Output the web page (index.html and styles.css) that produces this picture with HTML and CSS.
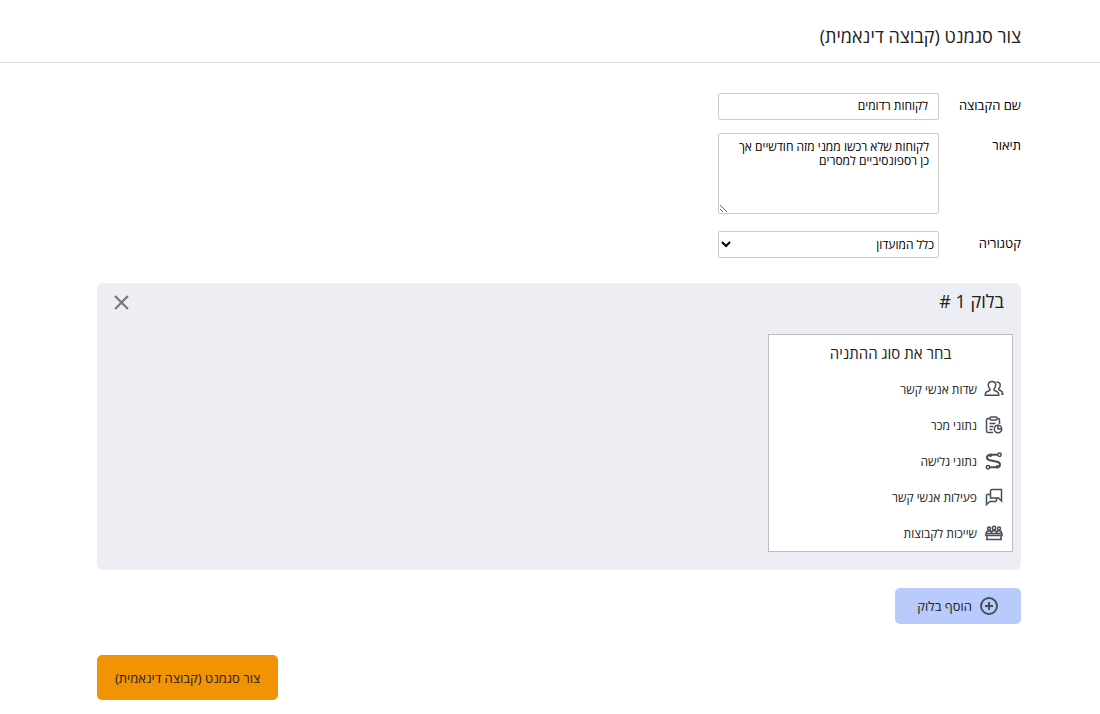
FILE: index.html
```html
<!DOCTYPE html>
<html lang="he" dir="rtl">
<head>
  <meta charset="UTF-8" />
  <meta name="viewport" content="width=device-width, initial-scale=1" />
  <title>צור סגמנט</title>
  <link rel="stylesheet" href="styles.css">
</head>
<body>
  <header class="page-header">
    <h1>צור סגמנט (קבוצה דינאמית)</h1>
  </header>

  <form class="content">
    <div class="fields">
      <label for="groupName">שם הקבוצה</label>
      <input id="groupName" class="control" type="text" value="לקוחות רדומים" />

      <label for="description">תיאור</label>
      <textarea id="description" class="control">לקוחות שלא רכשו ממני מזה חודשיים אך כן רספונסיביים למסרים</textarea>

      <label for="category">קטגוריה</label>
      <select id="category" class="control">
        <option>כלל המועדון</option>
      </select>
    </div>

    <section class="block">
      <div class="block-header">
        <h2>בלוק 1 #</h2>
        <button type="button" class="close" aria-label="סגור">
          <svg viewBox="0 0 14 14"><path d="M1 1l12 12M13 1L1 13" /></svg>
        </button>
      </div>

      <div class="conditions">
        <h3>בחר את סוג ההתניה</h3>
        <!-- Contact fields -->
        <button type="button" class="condition">
          <svg viewBox="0 0 20 20">
            <path d="M8 2.500c-2.300 0-3.700 1.500-3.700 3.600 0 1.700.6 3 1.500 3.800.5.500.3 1.300-.3 1.600l-2.600 1.200c-1.200.6-1.700 1.500-1.700 3.500h13.600c0-2-.5-2.900-1.700-3.500l-2.600-1.200c-.6-.3-.8-1.100-.3-1.600.9-.8 1.500-2.100 1.500-3.800 0-2.100-1.400-3.600-3.700-3.600z" />
            <path d="M12.500 2.900c2.300-.2 3.700 1.200 3.700 3.300 0 1.400-.5 2.600-1.300 3.300-.5.500-.3 1.200.3 1.500l1.700.8c1.300.6 1.800 1.500 1.800 3.400h-1.500" />
          </svg>
          <span>שדות אנשי קשר</span>
        </button>
        <!-- Sales data -->
        <button type="button" class="condition">
          <svg viewBox="0 0 20 20">
            <path d="M6 3.500H4.200C3 3.500 2.500 4 2.500 5v11c0 1 .5 1.500 1.700 1.500H9M13 3.500h1c1 0 1.500.5 1.500 1.500v4" />
            <rect x="6" y="2" width="7" height="3" rx="1" />
            <path d="M5.500 8.500h6M5.500 11.500h4M5.500 14.500h3" />
            <circle cx="14" cy="14" r="3.700" />
            <path d="M14 11v3h3" />
          </svg>
          <span>נתוני מכר</span>
        </button>
        <!-- Browsing data -->
        <button type="button" class="condition">
          <svg viewBox="0 0 20 20">
            <circle cx="15.500" cy="3.700" r="1.700" />
            <circle cx="4" cy="16.200" r="1.700" />
            <path class="thick" d="M13.800 3.700H7C1.500 4 2 8.500 6 9.300l7 1.400c4 .8 4 5.200 0 5.500H5.700" />
            <circle cx="6.500" cy="4.300" r="1" />
            <circle cx="13.500" cy="15.700" r="1" />
          </svg>
          <span>נתוני גלישה</span>
        </button>
        <!-- Contact activity -->
        <button type="button" class="condition">
          <svg viewBox="0 0 20 20">
            <path d="M8 2.500h9.500v11.500l-3-3H6.500V4c0-1 .5-1.500 1.500-1.500z" />
            <path d="M6.500 7.500h-3.500l-.5 1V17.500l3.500-3h5.500l1-1V11" />
          </svg>
          <span>פעילות אנשי קשר</span>
        </button>
        <!-- Group membership -->
        <button type="button" class="condition">
          <svg viewBox="0 0 20 20">
            <circle cx="5" cy="5.500" r="1.500" />
            <circle cx="10" cy="5" r="1.700" />
            <circle cx="15" cy="5.500" r="1.500" />
            <path d="M2.500 10c0-3 5-3 5 0 0-3.500 5-3.500 5 0 0-3 5-3 5 0" />
            <path d="M2 10.500h16v2H2zM3 12.500v3.500M17 12.500v3.500M2 16.500h16" />
          </svg>
          <span>שייכות לקבוצות</span>
        </button>
      </div>
    </section>

    <button type="button" class="add-block">
      <svg viewBox="0 0 20 20"><circle cx="10" cy="10" r="8" /><path d="M10 6v8M6 10h8" /></svg>
      <span>הוסף בלוק</span>
    </button>

    <div class="actions">
      <button type="submit" class="submit">צור סגמנט (קבוצה דינאמית)</button>
    </div>
  </form>
</body>
</html>
```
FILE: styles.css
```css
* {
  box-sizing: border-box;
}

body {
  margin: 0;
  background: #fff;
  color: #212121;
  font-family: "Open Sans", "Noto Sans", sans-serif;
  font-size: 13px;
}

button,
input,
textarea,
select {
  font-family: inherit;
  font-size: inherit;
  color: inherit;
}

h1,
h2,
h3 {
  margin: 0;
  font-weight: 400;
}

svg {
  display: block;
  fill: none;
  stroke: #4a4d57;
  stroke-width: 1.5;
}

.page-header {
  padding: 24px 79px 14px 97px;
  border-bottom: 1px solid #ddd;
}

h1 {
  font-size: 18px;
  line-height: 24px;
}

.content {
  padding: 30px 79px 14px 97px;
}

.fields {
  display: grid;
  grid-template-columns: 82px 221px;
  color: #000;
}

.fields label {
  line-height: 24px;
}

.control {
  width: 100%;
  height: 27px;
  margin: 0 0 13px;
  padding: 0 10px 2px;
  border: 1px solid #ccc;
  border-radius: 2px;
  background: #fff;
  font-size: 12px;
}

textarea.control {
  height: 81px;
  margin-bottom: 17px;
  padding: 6px 9px;
  line-height: 14px;
  resize: both;
}

select.control {
  margin-bottom: 25px;
  padding: 0;
}

.block {
  padding: 6px 8px 18px;
  border-radius: 6px;
  background: #edeef4;
}

.block-header {
  display: flex;
  justify-content: space-between;
  align-items: center;
  margin-bottom: 21px;
  padding: 0 9px;
}

h2 {
  font-size: 18px;
  font-weight: 500;
  line-height: 24px;
}

.close {
  padding: 2px 0 0;
  border: none;
  background: none;
  cursor: pointer;
}

.close svg {
  width: 15px;
  height: 15px;
  stroke: #777;
  stroke-width: 2;
}

.conditions {
  width: 245px;
  padding: 6px 8px 0;
  border: 1px solid #b9bccb;
  background: #fff;
}

h3 {
  margin-bottom: 6px;
  font-size: 15px;
  line-height: 24px;
  text-align: center;
}

.condition {
  display: flex;
  align-items: center;
  gap: 7px;
  width: 100%;
  height: 36px;
  padding: 0;
  border: none;
  background: none;
  font-size: 12px;
  text-align: right;
  cursor: pointer;
}

.condition svg,
.add-block svg {
  width: 20px;
  height: 20px;
}

.condition .thick {
  stroke-width: 2;
}

.add-block {
  display: flex;
  justify-content: center;
  align-items: center;
  gap: 7px;
  height: 36px;
  margin-top: 18px;
  padding: 0 22px;
  border: none;
  border-radius: 5px;
  background: #b9cbfc;
  cursor: pointer;
}

.add-block svg {
  stroke-width: 2;
}

.actions {
  display: flex;
  justify-content: flex-end;
  margin-top: 31px;
}

.submit {
  height: 45px;
  padding: 0 18px;
  border: none;
  border-radius: 5px;
  background: #f29305;
  cursor: pointer;
}
```
